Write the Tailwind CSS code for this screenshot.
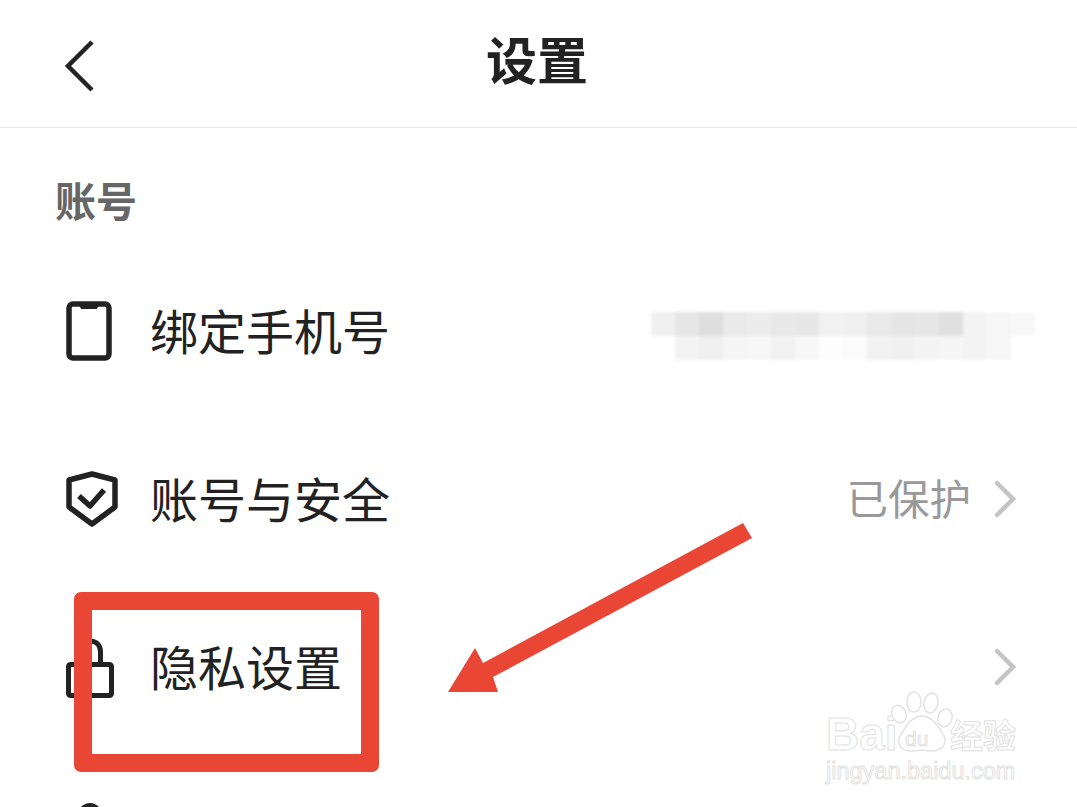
<!DOCTYPE html>
<html lang="zh-CN">
<head>
    <meta charset="UTF-8">
    <title>设置</title>
    <script src="https://cdn.jsdelivr.net/npm/@tailwindcss/browser@4"></script>
</head>
<body class="bg-white overflow-hidden font-['Noto_Sans_CJK_SC','Noto_Sans',sans-serif] text-[#222]">
<div class="relative w-[1077px] h-[807px] overflow-hidden">

    <!-- header -->
    <div class="grid grid-cols-[1fr_auto_1fr] items-center h-[128px] border-b border-[#e8e8e8]">
        <svg class="ml-[62px] mt-[4px] w-[34px] h-[54px]" viewBox="0 0 34 54" fill="none" stroke="#222" stroke-width="4.5">
            <path d="M30 3 L6 27 L30 51" />
        </svg>
        <div class="text-[51px] leading-none font-bold pb-[10px] mr-[3px]">设置</div>
        <div></div>
    </div>

    <!-- section label -->
    <div class="h-[119px] pl-[55px] pt-[46px] text-[41px] leading-[50px] font-bold text-[#666]">账号</div>

    <!-- phone row -->
    <div class="flex items-center h-[168px] pl-[66px] pr-[42px]">
        <div class="w-[84px] shrink-0">
            <svg class="w-[46px] h-[60px]" viewBox="0 0 46 60" fill="none">
                <rect x="3" y="3" width="40" height="54" rx="4" stroke="#222" stroke-width="5.5" />
                <path d="M13 3 H33 L31 8 H15 Z" fill="#222" />
            </svg>
        </div>
        <div class="text-[48px] leading-none pb-[4px]">绑定手机号</div>
        <div class="ml-auto mt-[10px] flex flex-col blur-[1.5px]">
            <div class="flex h-[24px]">
                <div class="w-[24px] bg-[#f0f0f0]"></div>
                <div class="w-[24px] bg-[#e6e6e6]"></div>
                <div class="w-[24px] bg-[#dedede]"></div>
                <div class="w-[24px] bg-[#eaeaea]"></div>
                <div class="w-[24px] bg-[#ececec]"></div>
                <div class="w-[24px] bg-[#e8e8e8]"></div>
                <div class="w-[24px] bg-[#e7e7e7]"></div>
                <div class="w-[24px] bg-[#f1f1f1]"></div>
                <div class="w-[24px] bg-[#f0f0f0]"></div>
                <div class="w-[24px] bg-[#e9e9e9]"></div>
                <div class="w-[24px] bg-[#e5e5e5]"></div>
                <div class="w-[24px] bg-[#e6e6e6]"></div>
                <div class="w-[24px] bg-[#e0e0e0]"></div>
                <div class="w-[24px] bg-[#f3f3f3]"></div>
                <div class="w-[24px] bg-[#f6f6f6]"></div>
                <div class="w-[24px] bg-[#f8f8f8]"></div>
            </div>
            <div class="flex h-[24px] pl-[24px] pr-[24px]">
                <div class="w-[24px] bg-[#f3f3f3]"></div>
                <div class="w-[24px] bg-[#f0f0f0]"></div>
                <div class="w-[24px] bg-[#f5f5f5]"></div>
                <div class="w-[24px] bg-[#f6f6f6]"></div>
                <div class="w-[24px] bg-[#f1f1f1]"></div>
                <div class="w-[24px] bg-[#f7f7f7]"></div>
                <div class="w-[24px] bg-[#fdfdfd]"></div>
                <div class="w-[24px] bg-[#fbfbfb]"></div>
                <div class="w-[24px] bg-[#f1f1f1]"></div>
                <div class="w-[24px] bg-[#f0f0f0]"></div>
                <div class="w-[24px] bg-[#f4f4f4]"></div>
                <div class="w-[24px] bg-[#f5f5f5]"></div>
                <div class="w-[24px] bg-[#f3f3f3]"></div>
                <div class="w-[24px] bg-[#f6f6f6]"></div>
            </div>
        </div>
    </div>

    <!-- security row -->
    <div class="flex items-center h-[168px] pl-[66px] pr-[61px]">
        <div class="w-[84px] shrink-0 mt-[2px]">
            <svg class="w-[52px] h-[58px]" viewBox="0 0 52 58" fill="none" stroke="#222" stroke-width="5.5" stroke-linejoin="round">
                <path d="M26 3 L49 9 V36 L26 53 L3 36 V9 Z" />
                <path d="M13 25 L24 35 L38 19" />
            </svg>
        </div>
        <div class="text-[48px] leading-none pb-[4px]">账号与安全</div>
        <div class="ml-auto text-[41.5px] leading-none text-[#999] pb-[3px]">已保护</div>
        <svg class="ml-[21px] w-[24px] h-[40px]" viewBox="0 0 24 40" fill="none" stroke="#c4c4c4" stroke-width="4.5" stroke-linecap="round">
            <path d="M5 4 L21 20 L5 36" />
        </svg>
    </div>

    <!-- privacy row -->
    <div class="flex items-center h-[168px] pl-[66px] pr-[61px]">
        <div class="w-[84px] shrink-0 mt-[2px]">
            <svg class="w-[48px] h-[60px]" viewBox="0 0 48 60" fill="none" stroke="#222" stroke-width="5">
                <path d="M13.5 24 V14 C13.5 7 18 3 24 3 C30 3 34.5 7 34.5 14 V24" />
                <rect x="2.5" y="26.5" width="43" height="31" rx="2" />
            </svg>
        </div>
        <div class="text-[48px] leading-none pb-[4px]">隐私设置</div>
        <svg class="ml-auto w-[24px] h-[40px]" viewBox="0 0 24 40" fill="none" stroke="#c4c4c4" stroke-width="4.5" stroke-linecap="round">
            <path d="M5 4 L21 20 L5 36" />
        </svg>
    </div>

    <!-- next row, cut off by the bottom edge -->
    <div class="pl-[78px] pt-[52px]">
        <div class="w-[24px] h-[24px] rounded-full border-[5px] border-[#222]"></div>
    </div>

    <!-- red annotation box -->
    <div class="absolute left-[74px] top-[592px] w-[305px] h-[180px] border-[18px] border-[#ea4636] rounded-[7px]"></div>

    <!-- red arrow -->
    <svg class="absolute left-0 top-0 w-[1077px] h-[807px] pointer-events-none" viewBox="0 0 1077 807">
        <path d="M743 523 L752 538 L493 677 L498 692 L448 692 L475 648 L483 663 Z" fill="#ea4636" />
    </svg>

    <!-- watermark -->
    <div class="absolute left-[826px] top-[690px] w-[200px] h-[100px] text-transparent">
        <div class="absolute left-0 top-[19px] text-[46px] leading-[50px] font-bold font-['Liberation_Sans',sans-serif] [-webkit-text-stroke:1px_#e2e2e2]">Bai</div>
        <svg class="absolute left-[64px] top-0 w-[66px] h-[68px]" viewBox="0 0 66 68" fill="#fff" stroke="#e2e2e2" stroke-width="1.5">
            <ellipse cx="9" cy="24" rx="7" ry="9" transform="rotate(-25 9 24)" />
            <ellipse cx="24" cy="12" rx="7" ry="10" />
            <ellipse cx="41" cy="13" rx="7" ry="10" transform="rotate(10 41 13)" />
            <ellipse cx="55" cy="28" rx="7" ry="9" transform="rotate(20 55 28)" />
            <path d="M32 26 C43 26 50 39 54 46 C58 55 50 62 40 61 C34 60 29 60 23 61 C12 62 6 54 10 46 C15 38 21 26 32 26 Z" />
        </svg>
        <div class="absolute left-[79px] top-[36px] text-[21px] leading-[26px] font-['Liberation_Sans',sans-serif] [-webkit-text-stroke:1px_#e2e2e2]">du</div>
        <div class="absolute left-[124px] top-[24px] text-[33px] leading-[40px] font-bold whitespace-nowrap [-webkit-text-stroke:1px_#e2e2e2]">经验</div>
        <div class="absolute left-0 top-[66px] text-[23.5px] leading-[30px] whitespace-nowrap font-['Liberation_Sans',sans-serif] [-webkit-text-stroke:1px_#e2e2e2]">jingyan.baidu.com</div>
    </div>
</div>
</body>
</html>
